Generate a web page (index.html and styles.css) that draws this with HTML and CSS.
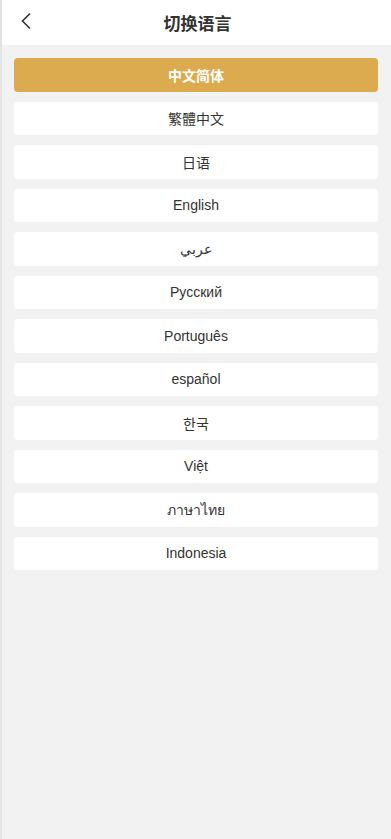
FILE: index.html
```html
<!DOCTYPE html>
<html lang="zh">
<head>
<meta charset="utf-8">
<link rel="stylesheet" href="styles.css">
</head>
<body>
<div class="page">
  <header class="header">
    <span class="back">
      <svg width="12" height="18" viewBox="0 0 12 18"><path d="M10 1.5 L2.5 9 L10 16.5" fill="none" stroke="#333" stroke-width="1.6"/></svg>
    </span>
    <h1 class="title">切换语言</h1>
  </header>
  <ul class="list">
    <li class="item active">中文简体</li>
    <li class="item">繁體中文</li>
    <li class="item">日语</li>
    <li class="item">English</li>
    <li class="item">عربي</li>
    <li class="item">Русский</li>
    <li class="item">Português</li>
    <li class="item">español</li>
    <li class="item">한국</li>
    <li class="item">Việt</li>
    <li class="item">ภาษาไทย</li>
    <li class="item">Indonesia</li>
  </ul>
</div>
</body>
</html>
```
FILE: styles.css
```css
html, body {
  margin: 0;
  padding: 0;
  height: 100%;
}
body {
  font-family: "Liberation Sans", Arial, "Noto Sans CJK SC", sans-serif;
  background: #f2f2f2;
  color: #333;
}
.page {
  min-height: 100%;
  border-left: 2px solid #e2e2e2;
  box-sizing: border-box;
  background: #f2f2f2;
}
.header {
  position: relative;
  height: 45px;
  background: #fff;
  display: flex;
  align-items: center;
  justify-content: center;
}
.back {
  position: absolute;
  left: 18px;
  top: 12px;
  display: flex;
}
.title {
  margin: 0;
  font-size: 17px;
  font-weight: bold;
  color: #333;
  font-family: "Noto Sans CJK SC", sans-serif;
  margin-left: 2px;
}
.list {
  list-style: none;
  margin: 0;
  padding: 13px 13px 0 12px;
}
.item {
  height: 33.5px;
  margin-bottom: 10px;
  background: #fff;
  border-radius: 4px;
  display: flex;
  align-items: center;
  justify-content: center;
  font-size: 14px;
  color: #333;
}
.item.active {
  background: #dcaa4f;
  color: #fff;
  font-weight: bold;
}
```
